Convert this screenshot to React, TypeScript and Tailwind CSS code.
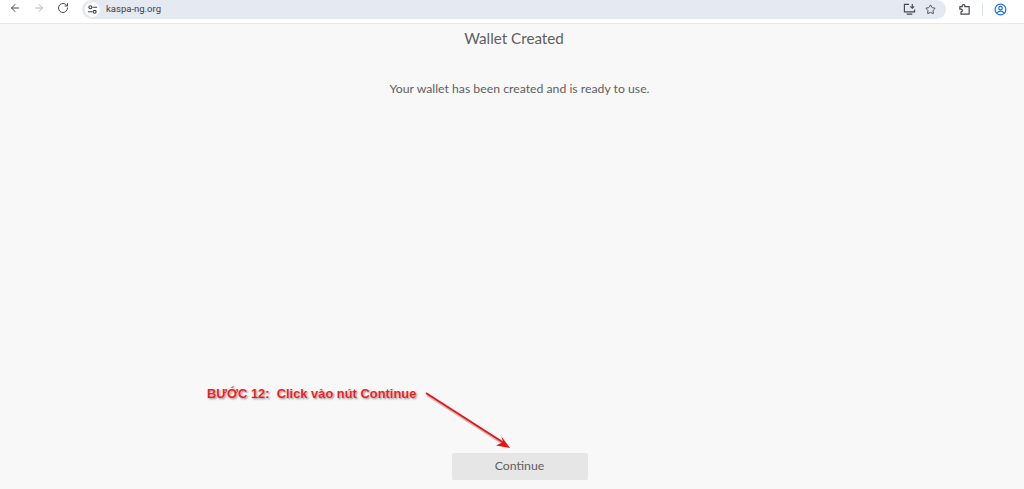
import { ArrowLeft, ArrowRight, RotateCw, Star } from "lucide-react";

const TuneIcon = () => (
    <svg width="11" height="11" viewBox="0 0 12 12" fill="none" stroke="#3c4043" strokeWidth="1.2">
        <path d="M6 3.500h5M1 3.500h.5M1 8.500h5M10.500 8.500h.5" />
        <circle cx="3.700" cy="3.500" r="1.600" />
        <circle cx="8.300" cy="8.500" r="1.600" />
    </svg>
);

const InstallIcon = () => (
    <svg width="13" height="13" viewBox="0 0 14 13" fill="none" stroke="#44474c" strokeWidth="1.2">
        <path d="M6.500 1H1.500v8h11V6.500M4 11.500h6" />
        <path d="M10 .5v4.500M8 3.200L10 5.200l2-2" />
    </svg>
);

const ExtensionIcon = () => (
    <svg width="13" height="13" viewBox="0 0 14 14" fill="none" stroke="#44474c" strokeWidth="1.3" strokeLinejoin="round">
        <path d="M2 4h2.600a1.500 1.500 0 0 1 2.800-1.400V4H12v8H3.200v-2.400a1.500 1.500 0 0 0 0-3H2z" />
    </svg>
);

const ProfileIcon = () => (
    <svg width="13" height="13" viewBox="0 0 14 14" fill="none" stroke="#1a73e8" strokeWidth="1.3">
        <circle cx="7" cy="7" r="5.800" />
        <circle cx="7" cy="5.600" r="1.900" />
        <path d="M3.200 11c1-1.600 2.200-2.200 3.800-2.200s2.800.6 3.800 2.200" />
    </svg>
);

const Toolbar = () => (
    <div className="flex h-[24px] shrink-0 items-start border-b border-[#e8e8e8] bg-white">
        <div className="flex h-[16px] w-[82px] items-center pl-[9px]">
            <ArrowLeft size={12} strokeWidth={2} color="#4a4d52" />
            <ArrowRight size={12} strokeWidth={2} color="#b4b6b9" className="ml-[12px]" />
            <RotateCw size={12} strokeWidth={2} color="#4a4d52" className="ml-[12px]" />
        </div>
        <div className="flex h-[19px] w-[864px] items-center rounded-full bg-[#e4e9f2] pr-[10px]">
            <span className="ml-[3px] flex h-[15px] w-[15px] items-center justify-center rounded-full bg-white">
                <TuneIcon />
            </span>
            <span className="ml-[6px] font-['Roboto',sans-serif] text-[9.5px] text-[#3c4043]">kaspa-ng.org</span>
            <div className="ml-auto flex items-center gap-[9px]">
                <InstallIcon />
                <Star size={11} strokeWidth={2} color="#44474c" />
            </div>
        </div>
        <div className="flex h-[19px] flex-1 items-center pl-[12px]">
            <ExtensionIcon />
            <span className="ml-[11px] h-[13px] w-px bg-[#dfe5ee]" />
            <span className="ml-[11px]">
                <ProfileIcon />
            </span>
        </div>
    </div>
);

const Annotation = () => (
    <>
        <span className="absolute left-[207px] top-[385px] font-['Liberation_Sans',sans-serif] text-[12.9px] leading-[17px] font-bold whitespace-pre text-[#ee1c25] [text-shadow:0_0_2px_#fff,1px_1px_2px_#777]">
            BƯỚC 12:  Click vào nút Continue
        </span>
        <svg className="absolute left-[420px] top-[385px]" width="100" height="70" viewBox="0 0 100 70" fill="none">
            <path d="M6 8L84 58" stroke="#888" strokeWidth="2.500" opacity="0.5" transform="translate(1 2)" />
            <path d="M6 8L84 58" stroke="#ee1111" strokeWidth="1.800" />
            <path d="M90 63L76 60.500L83 57L81.500 51.500Z" fill="#ee1111" />
        </svg>
    </>
);

export default function App() {
    return (
        <div className="relative flex h-[489px] w-[1024px] flex-col overflow-hidden bg-[#f8f8f8] font-['Lato',sans-serif] text-[#5f5f5f]">
            <Toolbar />
            <main className="flex flex-1 flex-col items-center pl-[15px]">
                <h1 className="mt-[3px] mr-[11px] text-[15.2px] leading-[22px] font-normal">Wallet Created</h1>
                <p className="mt-[31px] text-[12.25px] leading-[18px]">Your wallet has been created and is ready to use.</p>
                <button className="mt-auto mb-[9px] h-[27px] w-[136px] rounded-[2px] bg-[#e6e6e6] text-[12.3px] text-[#5f5f5f]">
                    Continue
                </button>
            </main>
            <Annotation />
        </div>
    );
}
